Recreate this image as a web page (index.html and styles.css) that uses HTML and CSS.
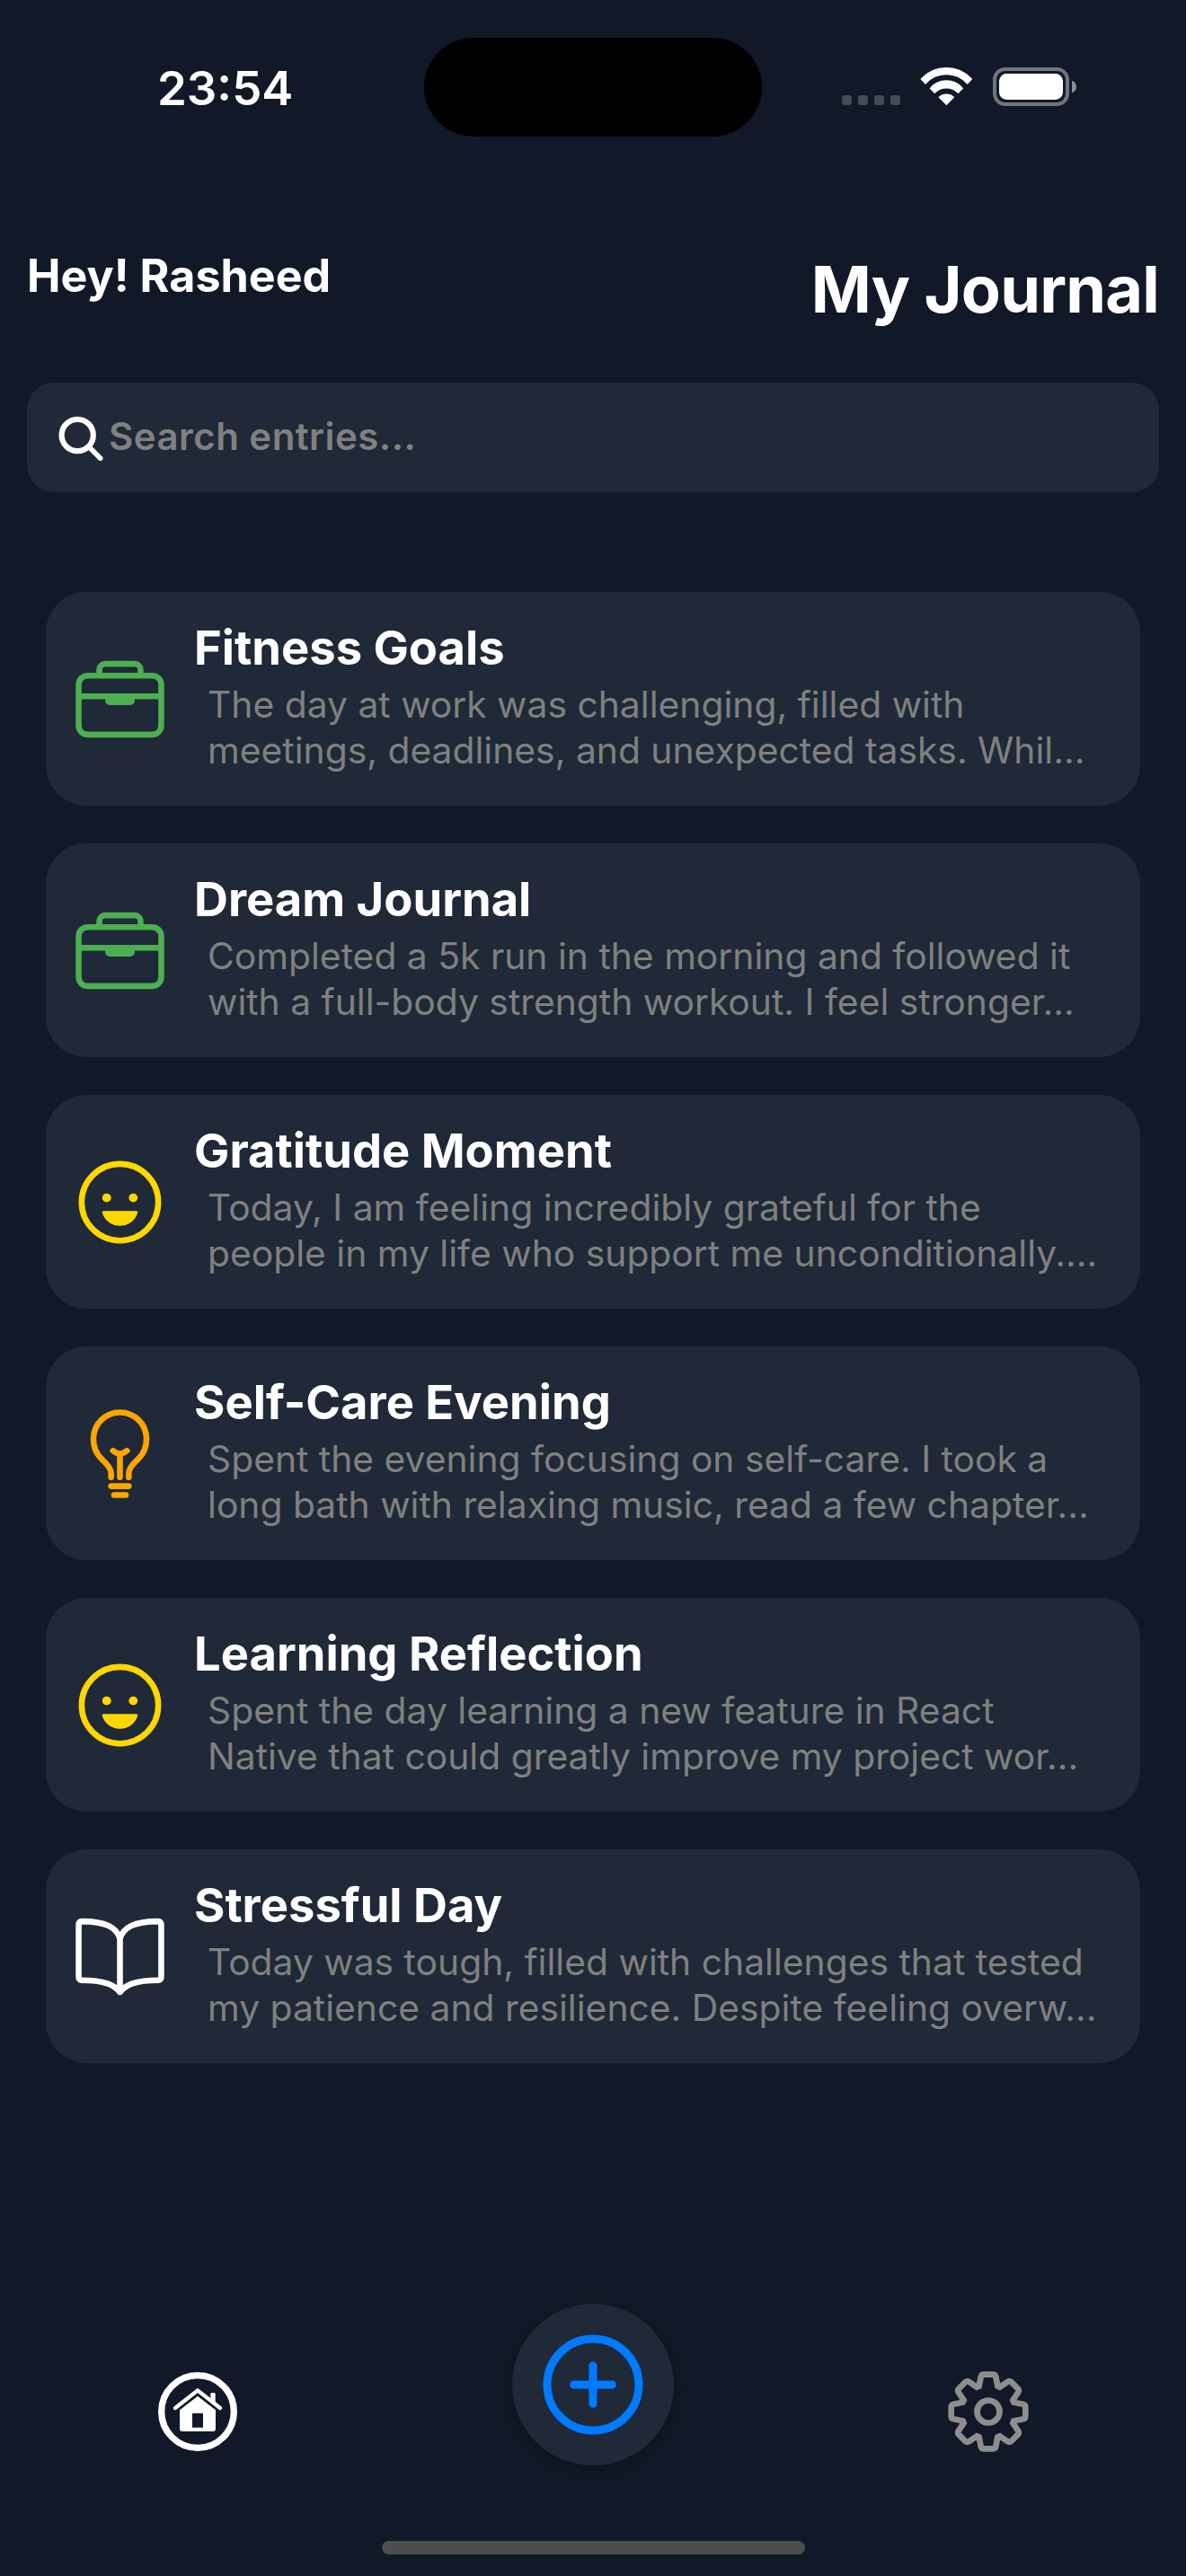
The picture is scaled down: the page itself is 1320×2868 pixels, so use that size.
FILE: index.html
```html
<!DOCTYPE html>
<html lang="en">
<head>
<meta charset="utf-8">
<title>My Journal</title>
<link rel="stylesheet" href="styles.css">
</head>
<body>
<svg class="sprite" aria-hidden="true">
  <symbol id="briefcase" viewBox="0 0 512 512">
    <g fill="none" stroke="currentColor" stroke-width="32" stroke-linejoin="round">
      <rect x="32" y="128" width="448" height="320" rx="48"/>
      <path d="M144 128V96a32 32 0 0132-32h160a32 32 0 0132 32v32M480 240H32M320 240v24a8 8 0 01-8 8H200a8 8 0 01-8-8v-24"/>
    </g>
  </symbol>
  <symbol id="happy" viewBox="0 0 512 512">
    <circle cx="256" cy="256" r="208" fill="none" stroke="currentColor" stroke-width="32"/>
    <g fill="currentColor">
      <circle cx="184" cy="232" r="24"/>
      <circle cx="328" cy="232" r="24"/>
      <path d="M256 384c-45.4 0-83.6-29.5-95.7-69.8a8 8 0 017.8-10.2h175.8a8 8 0 017.8 10.2c-12.1 40.3-50.3 69.8-95.7 69.8z"/>
    </g>
  </symbol>
  <symbol id="bulb" viewBox="0 0 512 512">
    <path fill="none" stroke="currentColor" stroke-width="32" stroke-linecap="round" stroke-linejoin="round" d="M304 384v-24c0-29 31.5-56.4 52-76 28.8-27.6 44-64.6 44-108 0-80-63.7-144-144-144a143.6 143.6 0 00-144 144c0 41.8 15.8 81.4 44 108 20.4 19.2 52 46.7 52 76v24M224 480h64M208 432h96M256 384V256M294 240s-21.5 16-38 16-38-16-38-16"/>
  </symbol>
  <symbol id="book" viewBox="0 0 512 512">
    <path fill="none" stroke="currentColor" stroke-width="32" stroke-linecap="round" stroke-linejoin="round" d="M256 160c16-63.2 76.4-95.4 208-96a15.9 15.9 0 0116 16v288a16 16 0 01-16 16c-128 0-177.5 25.8-208 64-30.4-38-80-64-208-64-9.9 0-16-8-16-17.9V80a15.9 15.9 0 0116-16c131.6.6 192 32.8 208 96zM256 160v288"/>
  </symbol>
</svg>

<div class="status">
  <div class="time">23:54</div>
  <div class="island"></div>
  <svg class="indicators" viewBox="111 72 783 135" width="261" height="45">
    <g fill="#464a55">
      <rect x="111" y="168" width="33" height="33" rx="10"/>
      <rect x="165" y="168" width="33" height="33" rx="10"/>
      <rect x="219" y="168" width="33" height="33" rx="10"/>
      <rect x="273" y="168" width="33" height="33" rx="10"/>
    </g>
    <g fill="#fff" stroke="#fff" stroke-width="4" stroke-linejoin="round">
      <path d="M376 114A114 114 0 0 1 544 114L530 129A94 94 0 0 0 390 129Z"/>
      <path d="M406 145A71 71 0 0 1 514 145L499 160A54 54 0 0 0 421 160Z"/>
      <path d="M436 175A36 36 0 0 1 484 175L460 199Z"/>
    </g>
    <rect x="621" y="81" width="243" height="117" rx="35" fill="none" stroke="#70747d" stroke-width="12"/>
    <rect x="636" y="96" width="213" height="87" rx="25" fill="#fff"/>
    <path d="M879 119C899 125 899 154 879 160Z" fill="#8a8d94"/>
  </svg>
</div>

<header class="header">
  <div class="greeting">Hey! Rasheed</div>
  <h1 class="title">My Journal</h1>
</header>

<div class="search">
  <svg class="search-icon" viewBox="0 0 54 54" width="54" height="54">
    <g fill="none" stroke="#fff" stroke-linecap="round">
      <circle cx="24.2" cy="23.5" r="17.6" stroke-width="6.2"/>
      <path d="M37 36.500 49.700 49.200" stroke-width="5.600"/>
    </g>
  </svg>
  <span class="placeholder">Search entries...</span>
</div>

<main class="entries">
  <article class="entry">
    <svg class="entry-icon green"><use href="#briefcase"/></svg>
    <div class="entry-text">
      <h2>Fitness Goals</h2>
      <p>The day at work was challenging, filled with<br>meetings, deadlines, and unexpected tasks. Whil…</p>
    </div>
  </article>
  <article class="entry">
    <svg class="entry-icon green"><use href="#briefcase"/></svg>
    <div class="entry-text">
      <h2>Dream Journal</h2>
      <p>Completed a 5k run in the morning and followed it<br>with a full-body strength workout. I feel stronger…</p>
    </div>
  </article>
  <article class="entry">
    <svg class="entry-icon yellow"><use href="#happy"/></svg>
    <div class="entry-text">
      <h2>Gratitude Moment</h2>
      <p>Today, I am feeling incredibly grateful for the<br>people in my life who support me unconditionally.…</p>
    </div>
  </article>
  <article class="entry">
    <svg class="entry-icon orange"><use href="#bulb"/></svg>
    <div class="entry-text">
      <h2>Self-Care Evening</h2>
      <p>Spent the evening focusing on self-care. I took a<br>long bath with relaxing music, read a few chapter…</p>
    </div>
  </article>
  <article class="entry">
    <svg class="entry-icon yellow"><use href="#happy"/></svg>
    <div class="entry-text">
      <h2>Learning Reflection</h2>
      <p>Spent the day learning a new feature in React<br>Native that could greatly improve my project wor…</p>
    </div>
  </article>
  <article class="entry">
    <svg class="entry-icon white"><use href="#book"/></svg>
    <div class="entry-text">
      <h2>Stressful Day</h2>
      <p>Today was tough, filled with challenges that tested<br>my patience and resilience. Despite feeling overw…</p>
    </div>
  </article>
</main>

<nav class="tabs">
  <svg class="tab" viewBox="-135 -135 270 270" width="90" height="90">
    <circle r="121" fill="none" stroke="#fff" stroke-width="22"/>
    <path d="M-75 -12 0 -71 75 -12" fill="none" stroke="#fff" stroke-width="13" stroke-linecap="round" stroke-linejoin="round"/>
    <path d="M43 -38V-59Q43 -63 47 -63H55Q59 -63 59 -59V-24Z" fill="#fff"/>
    <path fill="#fff" fill-rule="evenodd" d="M0 -52 60 -5V57Q60 66 51 66H-51Q-60 66 -60 57V-5ZM-15 5Q-18 5 -18 8V53H18V8Q18 5 15 5Z"/>
  </svg>
  <div class="add">
    <svg viewBox="0 0 512 512" width="136" height="136">
      <g fill="none" stroke="#007aff" stroke-width="34" stroke-linecap="round">
        <circle cx="256" cy="256" r="192"/>
        <path d="M256 176v160M336 256H176"/>
      </g>
    </svg>
  </div>
  <svg class="tab" viewBox="-135 -135 270 270" width="90" height="90">
    <g fill="none" stroke="#8e8e8f" stroke-width="20">
      <circle r="37.500"/>
      <path d="M-31-85L-25-116Q-23-124-15-124L15-124Q23-124 25-116L31-85L38.200-82L64.300-99.700Q71.400-103.900 77.100-98.300L98.300-77.100Q103.900-71.400 99.700-64.300L82-38.200L85-31L116-25Q124-23 124-15L124 15Q124 23 116 25L85 31L82 38.200L99.700 64.300Q103.900 71.400 98.300 77.100L77.100 98.300Q71.400 103.900 64.300 99.700L38.200 82L31 85L25 116Q23 124 15 124L-15 124Q-23 124-25 116L-31 85L-38.200 82L-64.300 99.700Q-71.400 103.900-77.100 98.300L-98.300 77.100Q-103.900 71.400-99.700 64.300L-82 38.200L-85 31L-116 25Q-124 23-124 15L-124-15Q-124-23-116-25L-85-31L-82-38.200L-99.700-64.300Q-103.900-71.400-98.300-77.100L-77.100-98.300Q-71.400-103.900-64.300-99.700L-38.200-82Z"/>
    </g>
  </svg>
</nav>
<div class="home-indicator"></div>
</body>
</html>
```
FILE: styles.css
```css
* {
  box-sizing: border-box;
  margin: 0;
  padding: 0;
}

body {
  width: 1320px;
  height: 2868px;
  display: flex;
  flex-direction: column;
  overflow: hidden;
  background: #111827;
  color: #fff;
  font-family: Inter, "Liberation Sans", sans-serif;
}

svg {
  display: block;
  flex: none;
}

.sprite {
  position: absolute;
  width: 0;
  height: 0;
}

.status {
  height: 277px;
  padding-top: 42px;
  display: grid;
  grid-template-columns: 472px 376px 472px;
  align-items: start;
}

.time {
  padding: 26px 0 0 175px;
  font-size: 52.7px;
  font-weight: 600;
  line-height: 60px;
}

.island {
  height: 110px;
  border-radius: 55px;
  background: #000;
}

.indicators {
  margin: 32px 0 0 89px;
}

.header {
  height: 149px;
  padding: 0 30px;
  display: flex;
  justify-content: space-between;
  align-items: flex-start;
}

.greeting {
  font-size: 50.2px;
  font-weight: 700;
  line-height: 60px;
}

.title {
  padding-top: 1px;
  font-size: 72px;
  font-weight: 700;
  line-height: 88px;
  letter-spacing: -0.8px;
}

.search {
  height: 122px;
  margin: 0 30px;
  padding: 0 32px 2px;
  display: flex;
  align-items: center;
  gap: 5px;
  border-radius: 30px;
  background: #1f2937;
}

.search-icon {
  margin-top: 4px;
}

.placeholder {
  color: #808080;
  font-size: 42px;
  font-weight: 600;
  line-height: 60px;
  letter-spacing: 0.45px;
}

.entries {
  margin: 111px 51px 0;
  display: flex;
  flex-direction: column;
  gap: 42px;
}

.entry {
  height: 238px;
  padding: 0 30px;
  display: flex;
  align-items: center;
  gap: 30px;
  border-radius: 45px;
  background: #1f2937;
}

.entry-icon {
  width: 105px;
  height: 105px;
}

.green { color: #4caf50; }
.yellow { color: #ffd700; }
.orange { color: #ffa500; }
.white { color: #fff; }

.entry-text {
  align-self: flex-start;
  padding-top: 30px;
  white-space: nowrap;
}

.entry-text h2 {
  font-size: 52.5px;
  font-weight: 700;
  line-height: 64px;
}

.entry-text p {
  margin: 6px 0 0 15px;
  color: #808080;
  font-size: 40.8px;
  line-height: 51px;
}

.tabs {
  height: 180px;
  margin: auto 0 84px;
  display: grid;
  grid-template-columns: repeat(3, 1fr);
  justify-items: center;
}

.tab {
  margin-top: 75px;
}

.add {
  width: 180px;
  height: 180px;
  display: flex;
  align-items: center;
  justify-content: center;
  border-radius: 50%;
  background: #1f2937;
  box-shadow: 0 6px 24px rgba(0, 0, 0, 0.25);
}

.home-indicator {
  width: 471px;
  height: 15px;
  margin: 0 auto 24px;
  flex: none;
  border-radius: 8px;
  background: #4d4d4d;
}
```
